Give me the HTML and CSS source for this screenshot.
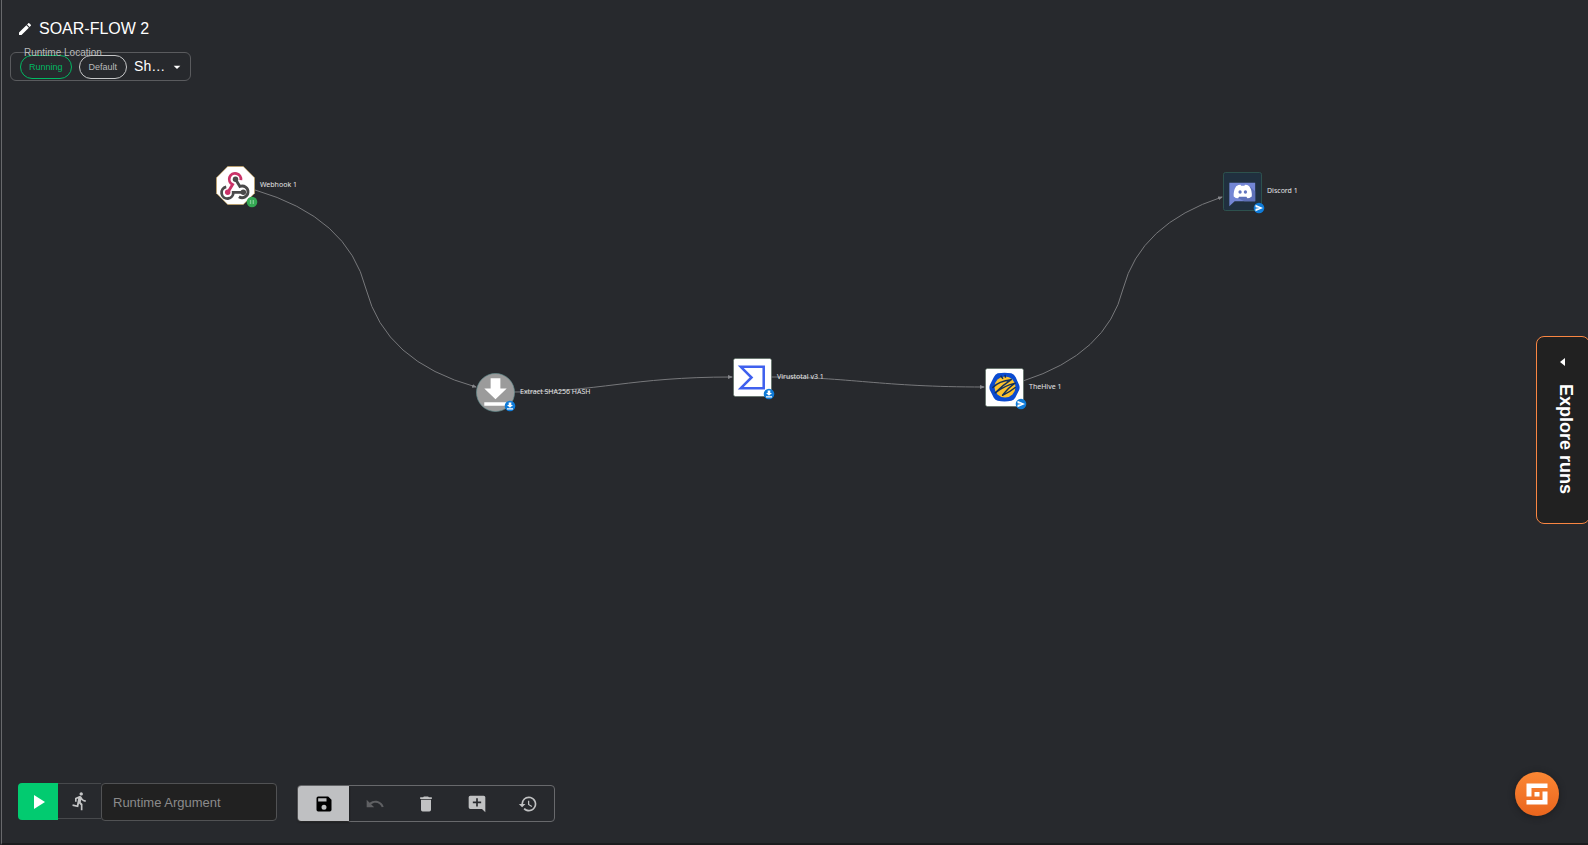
FILE: index.html
```html
<!DOCTYPE html>
<html lang="en">
<head>
<meta charset="utf-8">
<meta name="viewport" content="width=device-width, initial-scale=1">
<title>SOAR-FLOW 2</title>
<link rel="stylesheet" href="styles.css">
</head>
<body>
<main class="workspace">
  <div class="canvas">
    <svg class="edges" aria-hidden="true">
      <defs>
        <marker id="arrow" markerWidth="6" markerHeight="6" refX="4" refY="2" orient="auto" markerUnits="userSpaceOnUse"><path d="M0 0 5 2 0 4z" fill="#85868a"/></marker>
      </defs>
      <g class="edge">
        <path d="M255 190Q348 217 366 289Q385 362 476 387" marker-end="url(#arrow)"/>
        <path d="M514 392C600 392 630 377 732 377" marker-end="url(#arrow)"/>
        <path d="M771 377C850 377 880 387 984 387" marker-end="url(#arrow)"/>
        <path d="M1023 381Q1107 354 1123 289Q1140 224 1222 197" marker-end="url(#arrow)"/>
      </g>
    </svg>

    <div class="node node-webhook">
      <svg class="node-icon" viewBox="0 0 40 40">
        <path d="M12 .5H28L39.500 12V28L28 39.500H12L.5 28V12z" fill="#fff" stroke="#c8a35c" stroke-width=".7"/>
        <g fill="none" stroke-width="2.900">
          <path d="M25.500 14.500A6 6 0 1 0 17 19L12.500 26.500" stroke="#ca3268"/>
          <path d="M20 13.500 24.500 21A6 6 0 1 1 23.500 31.500" stroke="#4a4a4a"/>
          <path d="M10.500 21.500A6 6 0 1 0 17.700 27H28" stroke="#4a4a4a"/>
        </g>
        <circle cx="20" cy="13.500" r="2.800" fill="#4a4a4a"/><circle cx="12" cy="27" r="2.800" fill="#ca3268"/><circle cx="28" cy="27" r="2.800" fill="#4a4a4a"/>
      </svg>
      <span class="node-label">Webhook 1</span>
      <svg class="badge" viewBox="0 0 12 12"><circle cx="6" cy="6" r="5.300" fill="#34a853"/><path d="M4.500 4V8M7.300 4V8" stroke="#7fcb93" stroke-width="1.300"/></svg>
    </div>

    <div class="node node-extract">
      <svg class="node-icon" viewBox="0 0 40 40"><circle cx="20" cy="20" r="19.500" fill="#9b9b9b" stroke="#668f90" stroke-width=".7"/><path d="M15 5.500H25V16H31.500L20 27 8.500 16H15zM8.500 30H31.500V33.500H8.500z" fill="#fff"/></svg>
      <span class="node-label">Extract SHA256 HASH</span>
      <svg class="badge" viewBox="0 0 12 12"><circle cx="6" cy="6" r="5.300" fill="#0f7bd8"/><path d="M4.700 2.500H7.300V5H9L6 7.700 3 5H4.700zM3 8.300H9V9.500H3z" fill="#fff"/></svg>
    </div>

    <div class="node node-virus">
      <svg class="node-icon" viewBox="0 0 40 40"><rect x=".5" y=".5" width="39" height="39" rx="2" fill="#fff" stroke="#4b6355" stroke-width=".6"/><path d="M8 9H31.500V31H8L19 20z" fill="none" stroke="#3f60ee" stroke-width="2.600"/></svg>
      <span class="node-label">Virustotal v3 1</span>
      <svg class="badge" viewBox="0 0 12 12"><circle cx="6" cy="6" r="5.300" fill="#0f7bd8"/><path d="M4.700 2.500H7.300V5H9L6 7.700 3 5H4.700zM3 8.300H9V9.500H3z" fill="#fff"/></svg>
    </div>

    <div class="node node-hive">
      <svg class="node-icon" viewBox="0 0 40 40"><rect x=".5" y=".5" width="39" height="39" rx="2" fill="#fff" stroke="#4b6355" stroke-width=".6"/><path d="M13 5.500Q20 4 27 5.500Q30 6.500 31.500 9.500L35 17.500Q36 20 35 22.500L31 30.500Q29.500 33 27 33.500Q20 35 13 33.500Q10.500 33 9 30.500L5 22.500Q4 20 5 17.500L9 9.500Q10.500 6.500 13 5.500z" fill="#0b4bd0"/><circle cx="20.500" cy="19.500" r="10.800" fill="#fdc22d"/><path d="M8 20Q14 13.500 27 12Q19 17 10.500 25.500Q20 18 31 15.500Q24 20 18 28Q25 25 31 20" fill="none" stroke="#12305a" stroke-width="1.500" stroke-linejoin="round" stroke-linecap="round"/><path d="M18.500 11 16 8M21 10 20.500 7" stroke="#12305a" stroke-width="1.500"/></svg>
      <span class="node-label">TheHive 1</span>
      <svg class="badge" viewBox="0 0 12 12"><circle cx="6" cy="6" r="5.300" fill="#0f7bd8"/><path d="M2.500 2.700 10 6 2.500 9.300V6.700L6.500 6 2.500 5.300z" fill="#fff"/></svg>
    </div>

    <div class="node node-discord">
      <svg class="node-icon" viewBox="0 0 40 40"><rect x=".5" y=".5" width="39" height="39" rx="2" fill="#20303f" stroke="#315d55" stroke-width=".8"/><path d="M6.500 11H33V30H12L6.500 35z" fill="#7386d5"/><path d="M27 14 33 20V30H22L12 25z" fill="#5d70b8"/><path d="M13.500 14.500Q16 13 18 13L18.500 14H22L22.500 13Q25 13 27 14.500Q30 19 29.500 25Q27 27 25 27L24 25.500H16.500L15.500 27Q13 27 11 25Q10.500 19 13.500 14.500z" fill="#fff"/><circle cx="17.500" cy="20.500" r="1.700" fill="#6275c0"/><circle cx="23" cy="20.500" r="1.700" fill="#6275c0"/></svg>
      <span class="node-label">Discord 1</span>
      <svg class="badge" viewBox="0 0 12 12"><circle cx="6" cy="6" r="5.300" fill="#0f7bd8"/><path d="M2.500 2.700 10 6 2.500 9.300V6.700L6.500 6 2.500 5.300z" fill="#fff"/></svg>
    </div>
  </div>

  <header class="header">
    <div class="title-row">
      <button class="plain" aria-label="Edit name"><svg class="icon-small" viewBox="0 0 24 24"><path d="M3 17.250V21h3.750L17.810 9.940l-3.750-3.750L3 17.250zM20.710 7.040a1 1 0 0 0 0-1.410l-2.340-2.340a1 1 0 0 0-1.410 0l-1.830 1.830 3.750 3.750 1.830-1.830z"/></svg></button>
      <h1 class="title">SOAR-FLOW 2</h1>
    </div>
    <div class="location">
      <label class="location-label" for="location">Runtime Location</label>
      <span class="chip">Running</span>
      <span class="chip chip-default">Default</span>
      <select class="location-select" id="location"><option>Sh…</option></select>
      <svg class="caret" viewBox="0 0 24 24" aria-hidden="true"><path d="m7 10 5 5 5-5z"/></svg>
    </div>
  </header>

  <button class="explore">
    <svg class="explore-arrow" viewBox="0 0 6 8" aria-hidden="true"><path d="M5 0V8L0 4z"/></svg>
    <span>Explore runs</span>
  </button>

  <footer class="footer">
    <div class="runner">
      <button class="play" aria-label="Run"><svg class="icon-play" viewBox="0 0 24 24"><path d="M8 5v14l11-7z"/></svg></button>
      <button class="step" aria-label="Run from start"><svg class="icon" viewBox="0 0 24 24"><path d="M13.490 5.480c1.100 0 2-.9 2-2s-.9-2-2-2-2 .9-2 2 .9 2 2 2zm-3.600 13.900 1-4.400 2.100 2v6h2v-7.500l-2.100-2 .6-3c1.300 1.500 3.300 2.500 5.500 2.500v-2c-1.900 0-3.500-1-4.300-2.400l-1-1.600c-.4-.6-1-1-1.700-1-.3 0-.5.1-.8.1l-5.200 2.200v4.700h2v-3.400l1.800-.7-1.600 8.100-4.900-1-.4 2 7 1.400z"/></svg></button>
      <input class="argument" type="text" placeholder="Runtime Argument" aria-label="Runtime Argument">
    </div>
    <div class="tools">
      <button class="tool tool-save" aria-label="Save"><svg class="icon" viewBox="0 0 24 24"><path d="M17 3H5a2 2 0 0 0-2 2v14a2 2 0 0 0 2 2h14a2 2 0 0 0 2-2V7l-4-4zm-5 16a3 3 0 1 1 0-6 3 3 0 0 1 0 6zm3-10H5V5h10v4z"/></svg></button>
      <button class="tool" aria-label="Undo" disabled><svg class="icon" viewBox="0 0 24 24"><path d="M12.500 8c-2.650 0-5.050.990-6.900 2.600L2 7v9h9l-3.620-3.620c1.390-1.160 3.160-1.880 5.120-1.880 3.540 0 6.550 2.310 7.600 5.500l2.370-.78C21.080 11.030 17.150 8 12.500 8z"/></svg></button>
      <button class="tool" aria-label="Delete"><svg class="icon" viewBox="0 0 24 24"><path d="M6 19a2 2 0 0 0 2 2h8a2 2 0 0 0 2-2V7H6v12zM19 4h-3.500l-1-1h-5l-1 1H5v2h14V4z"/></svg></button>
      <button class="tool" aria-label="Add comment"><svg class="icon" viewBox="0 0 24 24"><path d="M21.990 4A2 2 0 0 0 20 2H4a2 2 0 0 0-2 2v12a2 2 0 0 0 2 2h14l4 4-.01-18zM17 11h-4v4h-2v-4H7V9h4V5h2v4h4v2z"/></svg></button>
      <button class="tool" aria-label="History"><svg class="icon" viewBox="0 0 24 24"><path d="M13 3a9 9 0 0 0-9 9H1l3.890 3.890.07.14L9 12H6a7 7 0 1 1 2.060 4.940l-1.420 1.420A9 9 0 1 0 13 3zm-1 5v5l4.280 2.540.72-1.210-3.500-2.080V8H12z"/></svg></button>
    </div>
    <button class="logo" aria-label="Support"><svg class="logo-mark" viewBox="0 0 22 22"><path d="M.5 .5H21.500V5H5.500V13.500H.5zM16.500 8.500H21.500V21.500H.5V17H16.500zM8.500 9H13.500V13.500H8.500z" fill="#fff"/></svg></button>
  </footer>
</main>
</body>
</html>
```
FILE: styles.css
```css
* { box-sizing: border-box; }

body {
  margin: 0;
  background: #27292d;
  color: #fff;
  font-family: "Liberation Sans", Arial, sans-serif;
}

button {
  margin: 0;
  padding: 0;
  border: 0;
  background: none;
  color: inherit;
  font: inherit;
  display: flex;
  align-items: center;
  justify-content: center;
}

svg { display: block; fill: currentColor; }

.workspace {
  position: relative;
  min-height: 100vh;
  margin-left: 1px;
  border-left: 1px solid #68696c;
  border-bottom: 2px solid #1b1c1e;
  display: flex;
  flex-direction: column;
  justify-content: space-between;
  overflow: hidden;
}

/* Flow diagram */
.canvas { position: absolute; inset: 0 0 0 -2px; }
.edges { width: 100%; height: 100%; }
.edge { fill: none; stroke: #77787b; stroke-width: 1; }
.node {
  position: absolute;
  display: flex;
  align-items: center;
  gap: 5px;
  width: max-content;
}
.node-icon { width: 39px; height: 39px; }
.node-label {
  padding-bottom: 1px;
  font: 7px/10px "Noto Sans", sans-serif;
  color: #e4e4e5;
}
.badge { position: absolute; left: 30px; top: 30px; width: 12px; height: 12px; }
.node-webhook { left: 216px; top: 166px; }
.node-extract { left: 476px; top: 373px; }
.node-extract .badge { left: 28px; top: 27px; }
.node-virus { left: 733px; top: 358px; }
.node-hive { left: 985px; top: 368px; }
.node-discord { left: 1223px; top: 172px; }

/* Header */
.header {
  position: relative;
  display: flex;
  flex-direction: column;
  align-items: flex-start;
  gap: 13px;
  padding: 19px 8px;
}
.title-row { display: flex; align-items: center; gap: 6px; padding-left: 7px; }
.icon-small { width: 16px; height: 16px; }
.title { margin: 0; font-size: 16px; line-height: 20px; font-weight: 400; }
.location {
  position: relative;
  display: flex;
  align-items: center;
  width: 181px;
  height: 29px;
  padding: 1px 5px 0 9px;
  border: 1px solid #5a5b5e;
  border-radius: 6px;
}
.location-label {
  position: absolute;
  left: 13px;
  top: -6px;
  font-size: 10px;
  line-height: 12px;
  color: #b9babb;
}
.chip {
  height: 24px;
  padding: 0 8px;
  margin-right: 7px;
  border: 1px solid #02b863;
  border-radius: 12px;
  color: #02b863;
  font-size: 9px;
  line-height: 23px;
}
.chip-default { padding: 0 9px; border-color: #c6c7c8; color: #b9babb; }
.location-select {
  appearance: none;
  flex: 1;
  min-width: 0;
  height: 24px;
  padding: 0 0 3px;
  border: 0;
  background: none;
  color: #fff;
  font: 14px/20px "Liberation Sans", Arial, sans-serif;
}
.caret { width: 16px; height: 16px; }

/* Side tab */
.explore {
  position: absolute;
  right: -2px;
  top: 336px;
  width: 54px;
  height: 188px;
  padding: 0 0 8px;
  gap: 18px;
  flex-direction: column;
  border: 1px solid #f98642;
  border-radius: 8px;
  background: #212121;
  font-size: 18px;
  line-height: 20px;
  font-weight: 700;
}
.explore span { writing-mode: vertical-rl; margin-left: 6px; }
.explore-arrow { width: 6px; height: 8px; }

/* Bottom bar */
.footer {
  position: relative;
  display: flex;
  align-items: flex-end;
  gap: 20px;
  padding: 0 29px 21px 16px;
}
.runner { display: flex; align-items: flex-start; padding-bottom: 1px; }
.play {
  width: 40px;
  height: 37px;
  border-radius: 4px 0 0 4px;
  background: #02cb70;
}
.icon-play { width: 24px; height: 24px; }
.step {
  width: 43px;
  height: 36px;
  border: solid #47494c;
  border-width: 1px 0;
  color: #c4c5c6;
}
.icon { width: 20px; height: 20px; }
.argument {
  width: 176px;
  height: 38px;
  padding: 0 11px;
  border: 1px solid #515254;
  border-radius: 4px;
  background: #212121;
  color: #fff;
  font: 13px/20px "Liberation Sans", Arial, sans-serif;
}
.argument::placeholder { color: #8b8b8b; opacity: 1; }
.tools {
  display: flex;
  width: 258px;
  height: 37px;
  border: 1px solid #68696c;
  border-radius: 4px;
}
.tool { flex: 1; color: #c1c2c3; }
.tool:disabled { color: #5f6063; }
.tool-save {
  background: #bfc0c2;
  color: #000;
  border-radius: 3px 0 0 3px;
  box-shadow: 0 1px 2px #111;
}
.logo {
  width: 44px;
  height: 44px;
  margin-left: auto;
  margin-bottom: 6px;
  border-radius: 50%;
  background: linear-gradient(#fb8734, #ea651d);
  box-shadow: 0 1px 6px #1b1c1e;
}
.logo-mark { width: 22px; height: 22px; }
```
